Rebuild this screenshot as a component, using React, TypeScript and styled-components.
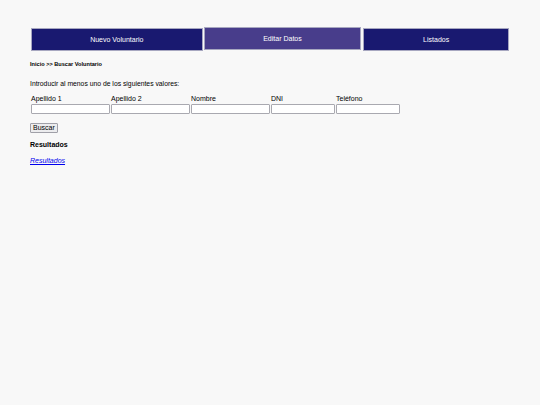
import React from 'react';
import styled, { createGlobalStyle } from 'styled-components';

const GlobalStyle = createGlobalStyle`
  html, body {
    margin: 0;
    padding: 0;
    background: #f8f8f8;
    font-family: "Liberation Sans", Arial, sans-serif;
  }
`;

const Page = styled.div`
  width: 540px;
  min-height: 405px;
  padding: 27px 30px 0;
  box-sizing: border-box;
  color: #000;
`;

const Nav = styled.nav`
  display: flex;
  align-items: flex-start;
  gap: 1px;
  width: 479px;
`;

const NavItem = styled.a<{ $active?: boolean; $width: number }>`
  display: flex;
  align-items: center;
  justify-content: center;
  box-sizing: border-box;
  width: ${p => p.$width}px;
  height: 23px;
  margin-top: ${p => (p.$active ? 0 : 1)}px;
  margin-left: ${p => (p.$active ? 0 : 1)}px;
  background: ${p => (p.$active ? '#483d8b' : '#191970')};
  border: 1px solid #a7a7c0;
  color: #fff;
  font-size: 7px;
  text-decoration: none;
`;

const Breadcrumb = styled.div`
  margin-top: 10px;
  font-size: 5.6px;
  font-weight: bold;
  line-height: 7px;
`;

const Intro = styled.p`
  margin: 11px 0 0;
  font-size: 6.8px;
  line-height: 9px;
`;

const Fields = styled.div`
  display: flex;
  margin-top: 7px;
`;

const Field = styled.label<{ $width: number }>`
  display: flex;
  flex-direction: column;
  box-sizing: border-box;
  width: ${p => p.$width}px;
  font-size: 7px;
  line-height: 8px;
  padding-left: 1px;
`;

const Input = styled.input<{ $width: number }>`
  box-sizing: border-box;
  width: ${p => p.$width}px;
  height: 10px;
  margin: 1px 0 0;
  padding: 0;
  border: 1px solid #a9a9b0;
  border-radius: 1px;
  background: #fff;
`;

const Button = styled.button`
  margin-top: 9px;
  box-sizing: border-box;
  height: 10px;
  padding: 0 2px;
  font-family: "Liberation Sans", Arial, sans-serif;
  font-size: 7px;
  line-height: 8px;
  border: 1px solid #a0a0a8;
  border-radius: 1px;
  background: #ececee;
  color: #000;
`;

const ResultsTitle = styled.h3`
  margin: 6px 0 0;
  font-size: 7px;
  line-height: 9px;
  font-weight: bold;
`;

const ResultsLink = styled.a`
  display: block;
  margin-top: 7px;
  font-size: 7px;
  line-height: 9px;
  font-style: italic;
  color: #0000ee;
  text-decoration: underline;
`;

const navItems = [
  { label: 'Nuevo Voluntario', width: 172 },
  { label: 'Editar Datos', width: 158, active: true },
  { label: 'Listados', width: 146 },
];

const fields = [
  { label: 'Apellido 1', width: 80, input: 79 },
  { label: 'Apellido 2', width: 80, input: 79 },
  { label: 'Nombre', width: 80, input: 79 },
  { label: 'DNI', width: 65, input: 64 },
  { label: 'Teléfono', width: 65, input: 64 },
];

const App: React.FC = () => (
  <>
    <GlobalStyle />
    <Page>
      <Nav>
        {navItems.map(item => (
          <NavItem key={item.label} href="#" $active={item.active} $width={item.width}>
            {item.label}
          </NavItem>
        ))}
      </Nav>

      <Breadcrumb>Inicio &gt;&gt; Buscar Voluntario</Breadcrumb>

      <Intro>Introducir al menos uno de los siguientes valores:</Intro>

      <Fields>
        {fields.map(f => (
          <Field key={f.label} $width={f.width}>
            {f.label}
            <Input type="text" $width={f.input} />
          </Field>
        ))}
      </Fields>

      <Button type="button">Buscar</Button>

      <ResultsTitle>Resultados</ResultsTitle>
      <ResultsLink href="#">Resultados</ResultsLink>
    </Page>
  </>
);

export default App;
